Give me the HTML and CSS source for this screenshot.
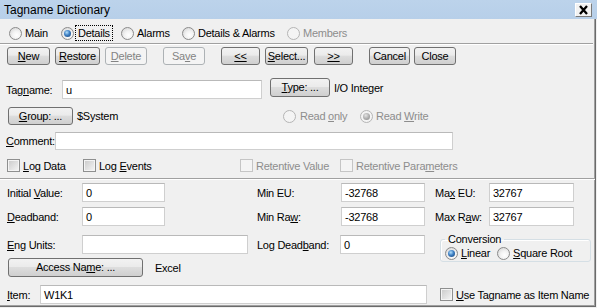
FILE: index.html
```html
<!DOCTYPE html>
<html lang="en">
<head>
    <meta charset="UTF-8" />
    <title>Tagname Dictionary</title>
    <link rel="stylesheet" href="styles.css">
</head>
<body>
<div class="window">
    <div class="titlebar">
        <span class="title">Tagname Dictionary</span>
        <span class="close-btn">
            <svg width="15" height="12" viewBox="0 0 15 12"><path d="M4 2 L11 10 M11 2 L4 10" stroke="#000" stroke-width="2.3" fill="none"/></svg>
        </span>
    </div>

    <div class="frame">
        <!-- page selector -->
        <div class="tabs">
            <label class="opt tab-main"><span class="radio"></span><span>Main</span></label>
            <label class="opt tab-details"><span class="radio on"></span><span class="focus">Details</span></label>
            <label class="opt tab-alarms"><span class="radio"></span><span>Alarms</span></label>
            <label class="opt tab-both"><span class="radio"></span><span>Details &amp; Alarms</span></label>
            <label class="opt off"><span class="radio"></span><span>Members</span></label>
        </div>
        <div class="sep"></div>

        <!-- command buttons -->
        <div class="toolbar">
            <span class="btn w43"><u>N</u>ew</span>
            <span class="btn w45"><u>R</u>estore</span>
            <span class="btn w42 disabled"><u>D</u>elete</span>
            <span class="btn w42 disabled spaced">Sa<u>v</u>e</span>
            <span class="btn w39 spaced"><u>&lt;&lt;</u></span>
            <span class="btn w43"><u>S</u>elect...</span>
            <span class="btn w39 next"><u>&gt;&gt;</u></span>
            <span class="btn w41 spaced">Cancel</span>
            <span class="btn w42 tight">Close</span>
        </div>

        <!-- tag details -->
        <div class="row row-tagname">
            <span class="lbl lbl-tag">Tag<u>n</u>ame:</span>
            <span class="field f-tag">u</span>
            <span class="btn tall type-btn"><u>T</u>ype: ...</span>
            <span class="after-btn">I/O Integer</span>
        </div>
        <div class="row row-group">
            <div class="group-cell">
                <span class="btn group-btn"><u>G</u>roup: ...</span>
                <span class="after-btn">$System</span>
            </div>
            <label class="opt off readonly"><span class="radio"></span><span>Read <u>o</u>nly</span></label>
            <label class="opt off"><span class="radio on"></span><span>Read <u>W</u>rite</span></label>
        </div>
        <div class="row row-comment">
            <span class="lbl lbl-comment"><u>C</u>omment:</span>
            <span class="field f-comment"></span>
        </div>
        <div class="row row-checks">
            <label class="opt chk-1"><span class="check"></span><span><u>L</u>og Data</span></label>
            <label class="opt chk-2"><span class="check"></span><span>Log <u>E</u>vents</span></label>
            <label class="opt off chk-3"><span class="check"></span><span>Retentive Value</span></label>
            <label class="opt off"><span class="check"></span><span>Retentive Para<u>m</u>eters</span></label>
        </div>

        <div class="divider"></div>

        <!-- I/O values -->
        <div class="row io row-a">
            <span class="lbl l-left">Initial <u>V</u>alue:</span>
            <span class="field f-short">0</span>
            <span class="lbl l-mid">Min EU:</span>
            <span class="field f-mid">-32768</span>
            <span class="lbl l-right">Ma<u>x</u> EU:</span>
            <span class="field f-right">32767</span>
        </div>
        <div class="row io row-b">
            <span class="lbl l-left"><u>D</u>eadband:</span>
            <span class="field f-short">0</span>
            <span class="lbl l-mid">Min Ra<u>w</u>:</span>
            <span class="field f-mid">-32768</span>
            <span class="lbl l-right">Max R<u>a</u>w:</span>
            <span class="field f-right">32767</span>
        </div>
        <div class="row io row-c">
            <span class="lbl l-left"><u>E</u>ng Units:</span>
            <span class="field f-units"></span>
            <span class="lbl l-mid2">Log Dead<u>b</u>and:</span>
            <span class="field f-mid2">0</span>
            <fieldset class="conversion">
                <legend>Conversion</legend>
                <label class="opt"><span class="radio on"></span><span><u>L</u>inear</span></label>
                <label class="opt sq"><span class="radio"></span><span><u>S</u>quare Root</span></label>
            </fieldset>
        </div>
        <div class="row row-d">
            <span class="btn tall access-btn">Access Na<u>m</u>e: ...</span>
            <span class="excel">Excel</span>
        </div>
        <div class="row io row-e">
            <span class="lbl l-item"><u>I</u>tem:</span>
            <span class="field f-item">W1K1</span>
            <label class="opt use-tag"><span class="check"></span><span><u>U</u>se Tagname as Item Name</span></label>
        </div>
    </div>
</div>
</body>
</html>
```

FILE: styles.css
```css
* {
    margin: 0;
    padding: 0;
    box-sizing: border-box;
}
body {
    width: 597px;
    height: 308px;
    overflow: hidden;
    background: #f0f0f0;
    color: #000;
    font-family: "Liberation Sans", Arial, sans-serif;
    font-size: 11px;
    letter-spacing: -0.25px;
}
u {
    text-decoration: underline;
    text-underline-offset: 1px;
}
.window {
    height: 308px;
    display: flex;
    flex-direction: column;
}

/* Title bar */
.titlebar {
    height: 19px;
    display: flex;
    align-items: center;
    padding-left: 4px;
    background: linear-gradient(#bcd3eb, #b7cfe9);
    font-size: 12px;
    letter-spacing: 0;
}
.close-btn {
    margin-left: auto;
    margin-right: 5px;
    width: 17px;
    height: 14px;
    display: flex;
    align-items: center;
    justify-content: center;
    background: #f2f2f2;
    border: 1px solid #fff;
    border-right-color: #7a7a7a;
    border-bottom-color: #7a7a7a;
}

/* Window body */
.frame {
    flex: 1;
    margin-right: 1px;
    margin-bottom: 1px;
    border-right: 1px solid #6b6b6b;
    border-bottom: 1px solid #6b6b6b;
    box-shadow: inset -1px -1px 0 #a0a0a0;
}

/* Radio / checkbox labels */
.opt {
    display: flex;
    align-items: center;
    gap: 3px;
    white-space: nowrap;
}
.opt.off {
    color: #8d8d8d;
}
.radio {
    width: 13px;
    height: 13px;
    flex-shrink: 0;
    position: relative;
    border-radius: 50%;
    border: 1px solid #8b8b8b;
    background: radial-gradient(circle at 60% 65%, #fff 0, #f3f3f3 40%, #cfcfcf 100%);
}
.radio.on::after {
    content: "";
    position: absolute;
    left: 2px;
    top: 2px;
    width: 7px;
    height: 7px;
    border-radius: 50%;
    background: radial-gradient(circle at 40% 35%, #b3e0fb 0, #3d7fc4 45%, #173f6e 100%);
}
.off .radio {
    border-color: #b5b5b5;
    background: #f4f4f4;
}
.off .radio.on::after {
    background: radial-gradient(circle at 40% 35%, #e4e4e4 0, #a6a6a6 60%, #8d8d8d 100%);
}
.check {
    width: 13px;
    height: 13px;
    flex-shrink: 0;
    border: 1px solid #8e8f8f;
    background: linear-gradient(135deg, #c9c9c9, #f6f6f6);
    box-shadow: inset 0 0 0 1px #f4f4f4;
}
.off .check {
    border-color: #c5c5c5;
    background: #f4f4f4;
    box-shadow: none;
}
.focus {
    outline: 1px dotted #000;
    outline-offset: 1px;
    padding: 0 1px;
}

/* Page selector */
.tabs {
    height: 24px;
    padding: 4px 0 0 9px;
    display: flex;
    align-items: center;
}
.tab-main { width: 52px; }
.tab-details { width: 60px; }
.tab-alarms { width: 61px; }
.tab-both { width: 105px; }

.sep {
    height: 2px;
    margin-right: 2px;
    border-top: 1px solid #a0a0a0;
    border-bottom: 1px solid #fff;
}

/* Buttons */
.toolbar {
    display: flex;
    height: 18px;
    margin-top: 2px;
    padding-left: 7px;
}
.btn {
    display: block;
    height: 18px;
    line-height: 16px;
    text-align: center;
    flex-shrink: 0;
    border: 1px solid #707070;
    border-radius: 3px;
    background: linear-gradient(#f2f2f2 0, #ebebeb 45%, #dddddd 50%, #cfcfcf 100%);
    white-space: nowrap;
}
.btn.tall {
    height: 19px;
    line-height: 17px;
}
.btn.disabled {
    border-color: #adb2b5;
    background: #f4f4f4;
    color: #838383;
}
.toolbar .btn + .btn { margin-left: 5px; }
.toolbar .btn.spaced { margin-left: 16px; }
.toolbar .btn.next { margin-left: 6px; }
.toolbar .btn.tight { margin-left: 4px; }
.w39 { width: 39px; }
.w41 { width: 41px; }
.w42 { width: 42px; }
.w43 { width: 43px; }
.w45 { width: 45px; }

/* Form rows */
.row {
    display: flex;
    align-items: center;
}
.lbl {
    flex-shrink: 0;
    white-space: nowrap;
}
.field {
    height: 19px;
    flex-shrink: 0;
    display: flex;
    align-items: center;
    padding-left: 3px;
    background: #fff;
    border: 1px solid #cfcfcf;
    border-top-color: #b9b9b9;
}
.after-btn {
    margin-left: 4px;
}

.row-tagname {
    height: 21px;
    margin-top: 13px;
    padding-left: 6px;
    align-items: flex-start;
}
.row-tagname .lbl { align-self: center; margin-top: 2px; }
.row-tagname .after-btn { align-self: center; margin-top: -2px; }
.lbl-tag { width: 56px; }
.f-tag { width: 200px; margin-top: 2px; }
.type-btn { width: 60px; margin-left: 8px; }

.row-group {
    height: 18px;
    margin-top: 8px;
    padding-left: 8px;
}
.group-cell {
    width: 275px;
    display: flex;
    align-items: center;
}
.group-btn { width: 65px; }
.readonly { width: 77px; gap: 4px; }

.row-comment {
    margin-top: 7px;
    padding-left: 6px;
}
.lbl-comment { width: 49px; }
.f-comment { width: 398px; height: 18px; }

.row-checks {
    height: 13px;
    margin-top: 9px;
    padding-left: 7px;
}
.chk-1 { width: 76px; }
.chk-2 { width: 157px; }
.chk-3 { width: 100px; }

.divider {
    height: 2px;
    margin-top: 6px;
    border-top: 1px solid #a0a0a0;
    border-bottom: 1px solid #fff;
}

/* I/O section */
.io {
    height: 19px;
    padding-left: 7px;
    align-items: flex-start;
}
.io .lbl { align-self: center; }
.row-a { margin-top: 3px; }
.row-b { margin-top: 5px; }
.row-c { margin-top: 9px; }
.l-left { width: 75px; }
.f-short { width: 83px; }
.l-mid { width: 84px; margin-left: 92px; }
.f-mid { width: 84px; }
.l-right { width: 54px; margin-left: 10px; }
.f-right { width: 85px; }
.f-units { width: 166px; }
.l-mid2 { width: 83px; margin-left: 9px; }
.f-mid2 { width: 85px; }

.conversion {
    width: 151px;
    height: 29px;
    margin: -2px 0 0 15px;
    padding: 0 4px;
    display: flex;
    align-items: center;
    border: 1px solid #d5dfe5;
    border-radius: 3px;
    box-shadow: inset 1px 1px 0 #fff;
}
.conversion legend {
    padding: 0 3px;
    line-height: 12px;
}
.conversion .sq { margin-left: 7px; }

.row-d {
    height: 19px;
    margin-top: 4px;
    padding-left: 8px;
}
.access-btn { width: 135px; }
.excel { margin-left: 12px; }

.row-e { margin-top: 8px; }
.l-item { width: 33px; }
.f-item { width: 387px; }
.use-tag { margin-left: 13px; align-self: center; }
```
